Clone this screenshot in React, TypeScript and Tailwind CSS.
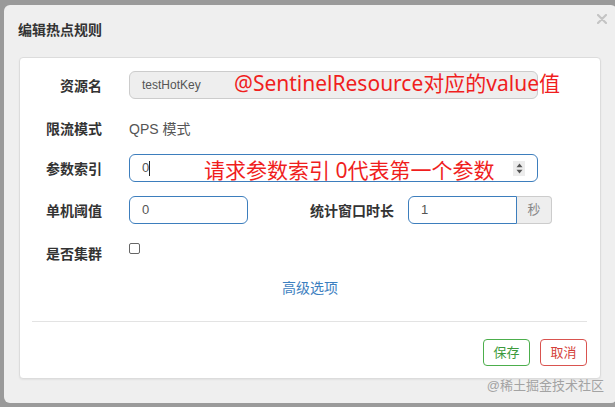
import React from "react";

const FONT = { fontFamily: '"Liberation Sans", "Noto Sans CJK SC", sans-serif' };
const RED = { fontFamily: '"Noto Sans", "Noto Sans CJK SC", sans-serif' };

function Label({ children, w = "w-[82px]" }: { children: React.ReactNode; w?: string }) {
  return (
    <div className={`${w} shrink-0 text-right text-[14px] leading-[20px] pt-[5px] font-semibold text-[#333]`}>
      {children}
    </div>
  );
}

export default function App() {
  return (
    <div className="w-[615px] h-[407px] bg-[#9a9a9a] pt-[5px] pl-[4px] overflow-hidden" style={FONT}>
      <div className="relative w-[613px] h-[398px] bg-[#efefef] rounded-[6px] flex flex-col">
        {/* header */}
        <div className="flex items-center h-[20px] mt-[15px] pl-[14px] pr-[10px]">
          <div className="text-[14px] font-semibold text-[#333] leading-[20px]">编辑热点规则</div>
          <div className="ml-auto -mt-[22px]">
            <svg width="10" height="10" viewBox="0 0 10 10">
              <path d="M1 1 L9 9 M9 1 L1 9" stroke="#c4c4c4" strokeWidth="2.2" strokeLinecap="round" />
            </svg>
          </div>
        </div>

        {/* card */}
        <div className="relative mt-[17px] ml-[15px] w-[582px] h-[322px] bg-white border border-[#dcdcdc] rounded-[4px] shadow-[0_1px_2px_rgba(0,0,0,0.06)] pt-[13px] flex flex-col">
          {/* row 1 */}
          <div className="flex h-[28px]">
            <Label>资源名</Label>
            <div className="ml-[27px] w-[409px] h-[28px] bg-[#eeeeee] border border-[#cccccc] rounded-[6px] pl-[12px] flex items-center text-[12px] text-[#555]">
              testHotKey
            </div>
          </div>
          {/* row 2 */}
          <div className="flex h-[28px] mt-[15px]">
            <Label>限流模式</Label>
            <div className="ml-[27px] pt-[5px] leading-[20px] text-[14px] text-[#555]">QPS 模式</div>
          </div>
          {/* row 3 */}
          <div className="flex h-[28px] mt-[12px]">
            <Label>参数索引</Label>
            <div className="ml-[27px] w-[409px] h-[28px] border border-[#3d7ebd] rounded-[6px] pl-[12px] pr-[12px] flex items-center text-[13px] text-[#555]">
              <span>0</span>
              <span className="w-px h-[15px] bg-[#222]" />
              <div className="ml-auto w-[12px] h-[15px] bg-[#ececec] flex items-center justify-center">
                <svg width="7" height="11" viewBox="0 0 7 11">
                  <path d="M3.5 0.5 L6.5 4.2 L0.5 4.2 Z" fill="#555" />
                  <path d="M3.5 10.5 L6.5 6.8 L0.5 6.8 Z" fill="#555" />
                </svg>
              </div>
            </div>
          </div>
          {/* row 4 */}
          <div className="flex h-[28px] mt-[14px]">
            <Label>单机阈值</Label>
            <div className="ml-[27px] w-[119px] h-[28px] border border-[#3d7ebd] rounded-[6px] pl-[12px] flex items-center text-[13px] text-[#555]">
              0
            </div>
            <Label w="w-[85px] ml-[61px]">统计窗口时长</Label>
            <div className="ml-[14px] flex h-[28px]">
              <div className="w-[109px] h-[28px] border border-[#3d7ebd] rounded-l-[6px] pl-[12px] flex items-center text-[13px] text-[#555]">
                1
              </div>
              <div className="w-[35px] h-[28px] bg-[#eeeeee] border border-l-0 border-[#cccccc] rounded-r-[4px] flex items-center justify-center text-[13px] text-[#888]">
                秒
              </div>
            </div>
          </div>
          {/* row 5 */}
          <div className="flex h-[28px] mt-[15px]">
            <Label>是否集群</Label>
            <div className="ml-[27px] mt-[4px] w-[11px] h-[11px] border border-[#666] rounded-[2px] bg-white" />
          </div>
          {/* advanced */}
          <div className="mt-[11px] text-center text-[14px] leading-[20px] text-[#3c80c0]">高级选项</div>
          {/* hr */}
          <div className="mt-[23px] ml-[12px] mr-[13px] h-px bg-[#e3e3e3]" />
          {/* buttons */}
          <div className="mt-[17px] mr-[13px] flex justify-end gap-[10px]">
            <button className="w-[47px] h-[27px] rounded-[4px] border border-[#4cae4c] bg-white text-[13px] text-[#3c9a3c]">
              保存
            </button>
            <button className="w-[47px] h-[27px] rounded-[4px] border border-[#d9534f] bg-white text-[13px] text-[#d43f3a]">
              取消
            </button>
          </div>

          {/* annotations */}
          <div className="absolute left-[214px] top-[15px] text-[21px] leading-[21px] text-[#f01e1e] whitespace-nowrap" style={RED}>
            @SentinelResource对应的value值
          </div>
          <div className="absolute left-[184px] top-[102px] text-[21px] leading-[21px] text-[#f01e1e] whitespace-nowrap" style={RED}>
            请求参数索引 0代表第一个参数
          </div>
        </div>

        {/* watermark */}
        <div className="absolute right-[13px] bottom-[9px] text-[13px] leading-[16px] text-[#a3a3a3]">
          @稀土掘金技术社区
        </div>
      </div>
    </div>
  );
}
